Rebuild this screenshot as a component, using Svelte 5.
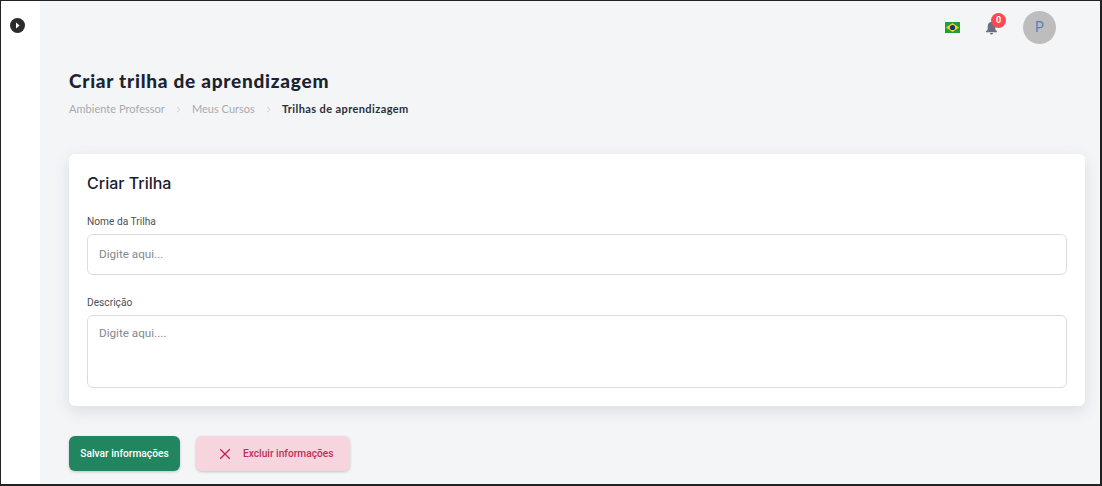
<script>
  const crumbs = ['Ambiente Professor', 'Meus Cursos'];
</script>

<div class="shell">
  <aside class="sidebar">
    <button class="toggle" aria-label="Abrir menu">
      <svg width="15" height="15" viewBox="0 0 15 15">
        <circle cx="7.5" cy="7.5" r="7.5" fill="#2b2b2d" />
        <path d="M6 4.6 L9.6 7.5 L6 10.4 Z" fill="#fff" />
      </svg>
    </button>
  </aside>

  <main class="content">
    <header class="topbar">
      <svg class="flag" width="15" height="11" viewBox="0 0 15 11">
        <rect width="15" height="11" fill="#1f9e3a" />
        <path d="M7.5 1 L14 5.5 L7.5 10 L1 5.5 Z" fill="#f2d31b" />
        <circle cx="7.5" cy="5.5" r="2.6" fill="#20307c" />
      </svg>
      <div class="bell">
        <svg width="13" height="14" viewBox="0 0 13 14">
          <path d="M6.5 1 C4 1 2.7 3 2.7 5.4 V8.4 L1 10.6 V11.2 H12 V10.6 L10.3 8.4 V5.4 C10.3 3 9 1 6.5 1 Z" fill="#66727f" />
          <path d="M5 12 H8 C8 13 7.3 13.6 6.5 13.6 C5.7 13.6 5 13 5 12 Z" fill="#66727f" />
        </svg>
        <span class="badge">0</span>
      </div>
      <div class="avatar">P</div>
    </header>

    <h1>Criar trilha de aprendizagem</h1>
    <nav class="crumbs">
      {#each crumbs as crumb}
        <span>{crumb}</span>
        <svg width="5" height="7" viewBox="0 0 5 7" fill="none" stroke="#c4c7cc" stroke-width="0.9">
          <path d="M1 0.8 L4 3.5 L1 6.2" />
        </svg>
      {/each}
      <strong>Trilhas de aprendizagem</strong>
    </nav>

    <section class="card">
      <h2>Criar Trilha</h2>
      <label class="field">
        <span>Nome da Trilha</span>
        <input type="text" placeholder="Digite aqui..." />
      </label>
      <label class="field">
        <span>Descrição</span>
        <textarea placeholder="Digite aqui...."></textarea>
      </label>
    </section>

    <div class="actions">
      <button class="btn save">Salvar informações</button>
      <button class="btn remove">
        <svg width="12" height="12" viewBox="0 0 12 12" fill="none" stroke="#c4214f" stroke-width="1.3">
          <path d="M1.2 1.2 L10.8 10.8 M10.8 1.2 L1.2 10.8" />
        </svg>
        Excluir informações
      </button>
    </div>
  </main>
</div>

<style>
  :global(body) {
    margin: 0;
    overflow: hidden;
  }

  .shell {
    display: flex;
    box-sizing: border-box;
    width: 1102px;
    height: 486px;
    border: solid #222;
    border-width: 1px 2px 2px 1px;
    background: #fff;
    font-family: Roboto, sans-serif;
  }

  .sidebar {
    flex: 0 0 39px;
    padding: 17px 0 0 9px;
    box-sizing: border-box;
  }

  .toggle {
    display: block;
    padding: 0;
    border: 0;
    background: none;
    line-height: 0;
  }

  .content {
    flex: 1;
    background: #f4f5f7;
    padding: 10px 15px 0 29px;
    min-width: 0;
  }

  .topbar {
    display: flex;
    align-items: center;
    justify-content: flex-end;
    height: 33px;
    padding-right: 29px;
  }

  .flag {
    margin-right: 25px;
  }

  .bell {
    position: relative;
    display: flex;
    margin-right: 25px;
  }

  .badge {
    position: absolute;
    top: -8px;
    left: 6px;
    width: 15px;
    height: 15px;
    border-radius: 50%;
    background: #fb4a52;
    color: #fff;
    font-size: 9px;
    font-weight: 700;
    line-height: 15px;
    text-align: center;
  }

  .avatar {
    width: 33px;
    height: 33px;
    border-radius: 50%;
    background: #bdbdbd;
    color: #4f80bd;
    font-size: 14px;
    line-height: 33px;
    text-align: center;
  }

  h1 {
    margin: 25px 0 0;
    color: #1a2233;
    font-family: Lato, sans-serif;
    font-size: 19px;
    font-weight: 900;
    line-height: 24px;
    letter-spacing: 0.75px;
  }

  .crumbs {
    display: flex;
    align-items: center;
    gap: 11px;
    margin-top: 9px;
    color: #a8abb0;
    font-family: Lato, sans-serif;
    font-size: 11px;
    line-height: 14px;
    letter-spacing: 0.03px;
  }

  .crumbs strong {
    color: #2a2f3a;
    font-weight: 700;
    letter-spacing: 0.4px;
  }

  .card {
    margin-top: 38px;
    height: 252px;
    box-sizing: border-box;
    padding: 19px 18px 0;
    border-radius: 6px;
    background: #fff;
    box-shadow: 0 5px 16px rgba(60, 80, 110, 0.14);
  }

  h2 {
    margin: 0;
    color: #1a2030;
    font-family: Inter, sans-serif;
    font-size: 16px;
    font-weight: 500;
    line-height: 20px;
  }

  .field {
    display: block;
  }

  .field + .field {
    margin-top: 21px;
  }

  h2 + .field {
    margin-top: 22px;
  }

  .field span {
    display: block;
    margin-bottom: 6px;
    color: #4d4f53;
    font-size: 10.2px;
    line-height: 13px;
  }

  input,
  textarea {
    display: block;
    width: 100%;
    box-sizing: border-box;
    padding: 0 11px;
    border: 1px solid #dcdcde;
    border-radius: 6px;
    background: #fff;
    color: #333;
    font: 11.7px Roboto, sans-serif;
    outline: none;
    resize: none;
  }

  input {
    height: 41px;
    padding-bottom: 2px;
  }

  textarea {
    height: 73px;
    padding-top: 10px;
  }

  input::placeholder,
  textarea::placeholder {
    color: #85888d;
    opacity: 1;
  }

  .actions {
    display: flex;
    gap: 16px;
    margin-top: 30px;
  }

  .btn {
    display: flex;
    align-items: center;
    height: 35px;
    border: 0;
    border-radius: 6px;
    font-family: Roboto, sans-serif;
    font-size: 10.2px;
    font-weight: 500;
    box-shadow: 0 1px 3px rgba(0, 0, 0, 0.2);
  }

  .save {
    width: 111px;
    justify-content: center;
    padding: 0;
    background: #218660;
    color: #fff;
  }

  .remove {
    width: 154px;
    gap: 12px;
    padding: 0 0 0 23px;
    background: #f6d5de;
    color: #c42f58;
  }
</style>
